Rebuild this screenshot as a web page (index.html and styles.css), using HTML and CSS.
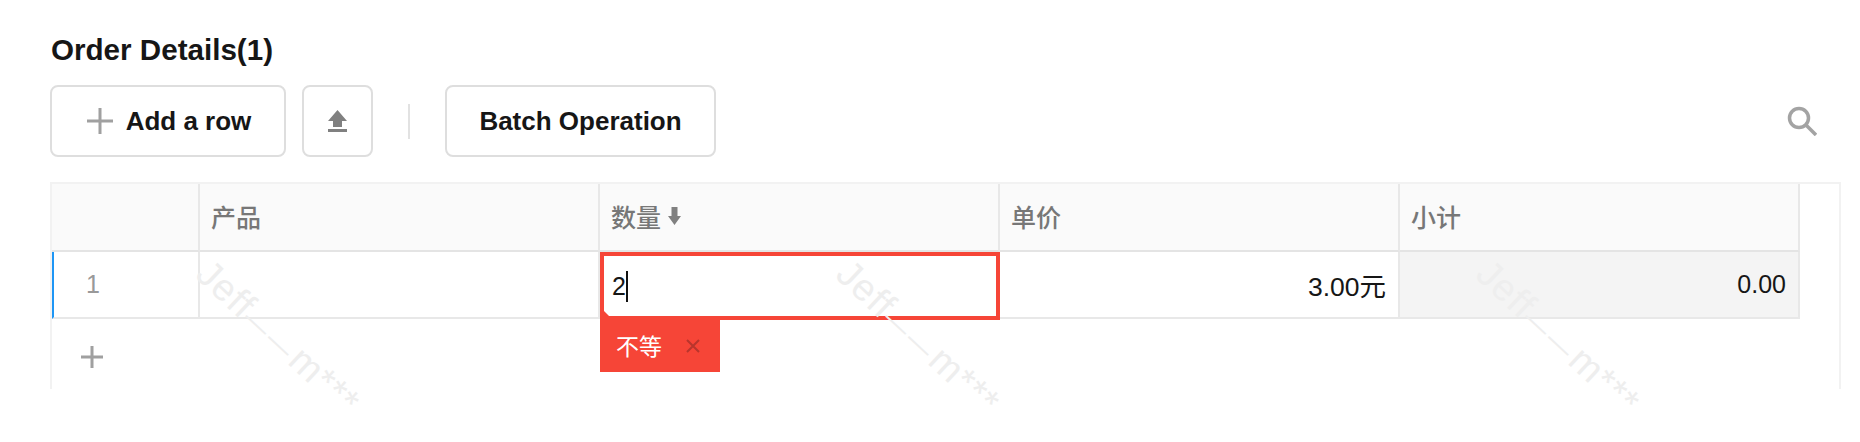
FILE: index.html
```html
<!DOCTYPE html>
<html lang="zh">
<head>
<meta charset="utf-8">
<title>Order Details</title>
<link rel="stylesheet" href="styles.css">
</head>
<body>
<main class="page">
  <h2 class="title">Order Details(1)</h2>
  <div class="toolbar">
    <button class="btn btn-add">
      <svg class="ico-plus" viewBox="0 0 26 26"><path d="M13 0v26M0 13h26"/></svg>
      <span>Add a row</span>
    </button>
    <button class="btn btn-icon">
      <svg class="ico-upload" viewBox="0 0 19 22"><path d="M9.5 0L19 11h-5v6H5v-6H0zM0 19h19v3H0z"/></svg>
    </button>
    <span class="divider"></span>
    <button class="btn btn-batch">Batch Operation</button>
    <svg class="ico-search" viewBox="0 0 30 30"><circle cx="12" cy="12" r="9.5"/><path d="M19 19l10 10"/></svg>
  </div>
  <div class="table-wrap">
    <div class="grid">
      <div class="th"></div>
      <div class="th">产品</div>
      <div class="th">数量<svg class="ico-sort" viewBox="0 0 13 18"><path d="M3.500 0h6v9H13l-6.500 9L0 9h3.500z"/></svg></div>
      <div class="th">单价</div>
      <div class="th">小计</div>
      <div class="td td-index">1</div>
      <div class="td"></div>
      <div class="td td-edit">
        <div class="editor"><span class="value">2</span><i class="caret"></i></div>
        <div class="tip"><span class="tip-text">不等</span><svg class="ico-close" viewBox="0 0 14 14"><path d="M1 1l12 12M13 1L1 13"/></svg></div>
      </div>
      <div class="td td-num td-price">3.00元</div>
      <div class="td td-num td-total">0.00</div>
    </div>
    <div class="add-row"><svg class="ico-plus-sm" viewBox="0 0 22 22"><path d="M11 0v22M0 11h22"/></svg></div>
  </div>
</main>
<span class="wm wm-1">Jeff<span class="dash">——</span>m***</span>
<span class="wm wm-2">Jeff<span class="dash">——</span>m***</span>
<span class="wm wm-3">Jeff<span class="dash">——</span>m***</span>
</body>
</html>
```

FILE: styles.css
```css
html, body { margin: 0; padding: 0; background: #fff; }
body {
  width: 1860px;
  height: 442px;
  overflow: hidden;
  position: relative;
  font-family: "Liberation Sans", "Noto Sans CJK SC", sans-serif;
  color: #161616;
}
.page { padding: 32px 19px 0 50px; }
.title {
  margin: 0 0 0 1px;
  font-size: 29.600px;
  line-height: 36px;
  font-weight: 700;
}
.toolbar {
  display: flex;
  align-items: center;
  margin: 17px 0 0 0;
  height: 72px;
}
.btn {
  height: 72px;
  box-sizing: border-box;
  border: 2px solid #dedede;
  border-radius: 8px;
  background: #fff;
  font: 700 26px "Liberation Sans", sans-serif;
  color: #161616;
  display: flex;
  align-items: center;
  justify-content: center;
  padding: 0;
}
.btn-add { width: 236px; gap: 13px; padding-left: 2px; }
.btn-icon { width: 71px; margin-left: 16px; }
.btn-batch { width: 271px; }
.divider { width: 2px; height: 35px; background: #e2e2e2; margin: 0 35px 0 35px; }
.ico-plus { width: 26px; height: 26px; fill: none; stroke: #a0a0a0; stroke-width: 3; }
.ico-upload { width: 19px; height: 22px; fill: #808080; }
.ico-search {
  width: 30px;
  height: 30px;
  margin-left: auto;
  margin-right: 24px;
  fill: none;
  stroke: #a3a3a3;
  stroke-width: 3.500;
}
.table-wrap {
  margin-top: 25px;
  width: 1791px;
  height: 207px;
  box-sizing: border-box;
  border: 2px solid #f2f2f2;
  border-bottom: 0;
  position: relative;
}
.grid {
  display: grid;
  grid-template-columns: 148px 400px 400px 400px 400px;
  grid-template-rows: 68px 67px;
}
.th {
  background: #fafafa;
  border-right: 2px solid #e8e8e8;
  border-bottom: 2px solid #e4e4e4;
  box-sizing: border-box;
  padding: 0 0 3px 11px;
  display: flex;
  align-items: center;
  font-size: 25px;
  font-weight: 500;
  color: #777;
}
.ico-sort { width: 13px; height: 18px; fill: #808080; margin-left: 7px; }
.td {
  background: #fff;
  border-right: 2px solid #e8e8e8;
  border-bottom: 2px solid #e8e8e8;
  box-sizing: border-box;
  font-size: 25px;
  display: flex;
  align-items: center;
}
.td-index {
  justify-content: center;
  color: #999;
  border-left: 2px solid #1e96f5;
  padding-right: 66px;
}
.td-num { justify-content: flex-end; padding-right: 12px; }
.td-price { font-size: 26.500px; }
.td-total { background: #f4f4f4; }
.td-edit { position: relative; }
.editor {
  position: absolute;
  left: 0;
  right: -2px;
  top: 0;
  height: 68px;
  box-sizing: border-box;
  border: 4px solid #f64537;
  background: #fff;
  display: flex;
  align-items: center;
  padding-left: 8px;
  z-index: 2;
}
.editor::after {
  content: "";
  position: absolute;
  left: 0;
  bottom: 0;
  border-left: 5px solid #f64537;
  border-top: 5px solid transparent;
}
.caret { width: 2px; height: 31px; background: #111; }
.tip {
  position: absolute;
  left: 0;
  top: 68px;
  width: 120px;
  height: 52px;
  background: #f64537;
  color: #fff;
  display: flex;
  align-items: center;
  font-size: 23px;
  padding-left: 16px;
  box-sizing: border-box;
  z-index: 3;
}
.tip-text { margin-top: -2px; }
.ico-close {
  width: 14px;
  height: 14px;
  margin-left: 24px;
  fill: none;
  stroke: #b8352c;
  stroke-width: 2;
}
.add-row { height: 70px; display: flex; align-items: center; padding: 6px 0 0 29px; box-sizing: border-box; }
.ico-plus-sm { width: 22px; height: 22px; fill: none; stroke: #a0a0a0; stroke-width: 3; }
.wm {
  position: absolute;
  top: 338px;
  font-size: 38px;
  letter-spacing: 1px;
  color: #eee;
  white-space: nowrap;
  transform: translate(-50%, -50%) rotate(43deg);
  pointer-events: none;
  z-index: 5;
}
.dash { font-size: 27px; letter-spacing: 4px; }
.wm-1 { left: 278px; }
.wm-2 { left: 918px; }
.wm-3 { left: 1558px; }
```
